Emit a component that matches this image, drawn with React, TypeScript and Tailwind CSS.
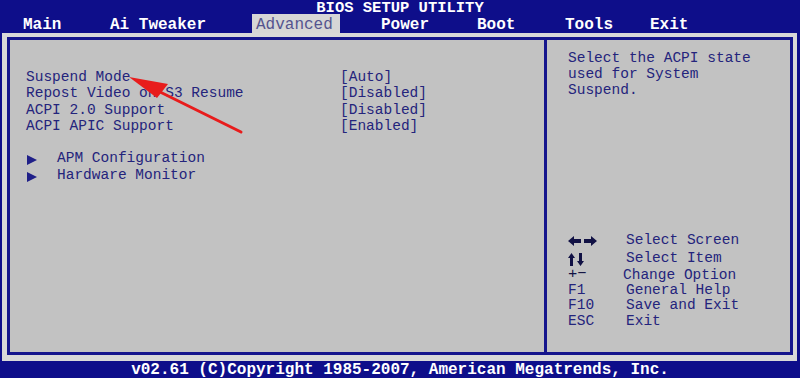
import React from "react";

const mono = { fontFamily: '"Courier New", "Liberation Mono", monospace' };

function Tri() {
  return (
    <svg width="10" height="10" viewBox="0 0 10 10" className="absolute left-[1px] top-[5px]">
      <polygon points="0,0 10,5 0,10" fill="#1f1f88" />
    </svg>
  );
}

function LR() {
  return (
    <svg width="30" height="10" viewBox="0 0 30 10">
      <polygon points="0,5 6,0 6,3 13,3 13,7 6,7 6,10" fill="#111144" />
      <polygon points="29,5 23,0 23,3 16,3 16,7 23,7 23,10" fill="#111144" />
    </svg>
  );
}

function UD() {
  return (
    <svg width="16" height="13" viewBox="0 0 16 13">
      <polygon points="3.5,0 7,5 5,5 5,13 2,13 2,5 0,5" fill="#111144" />
      <polygon points="12.5,13 16,8 14,8 14,0 11,0 11,8 9,8" fill="#111144" />
    </svg>
  );
}

export default function App() {
  const settings: [string, string][] = [
    ["Suspend Mode", "[Auto]"],
    ["Repost Video on S3 Resume", "[Disabled]"],
    ["ACPI 2.0 Support", "[Disabled]"],
    ["ACPI APIC Support", "[Enabled]"],
  ];
  return (
    <div
      className="relative w-[800px] h-[378px] bg-[#0e0e8a] flex flex-col overflow-hidden"
      style={mono}
    >
      {/* header */}
      <div className="h-[33px] flex flex-col">
        <div className="h-[14px] leading-[16px] text-center text-white font-bold text-[15.5px]">
          BIOS SETUP UTILITY
        </div>
        <div className="h-[19px] flex items-stretch text-white font-bold text-[16px] leading-[16px] pl-[23px]">
          <span className="w-[87px] pt-[3px]">Main</span>
          <span className="w-[142px] pt-[3px]">Ai Tweaker</span>
          <span className="w-[88px] bg-[#d6d6d6] text-[#54548e] font-normal pl-[4px] pt-[3px]">Advanced</span>
          <span className="w-[41px]" />
          <span className="w-[96px] pt-[3px]">Power</span>
          <span className="w-[88px] pt-[3px]">Boot</span>
          <span className="w-[85px] pt-[3px]">Tools</span>
          <span className="pt-[3px]">Exit</span>
        </div>
      </div>

      {/* body */}
      <div className="h-[329px] ml-[2px] mr-[3px] bg-[#d8d8d8] pt-[4px] pl-[5px] pr-[4px] pb-[6px] flex">
        <div className="flex-1 border-[3px] border-[#15158c] flex bg-[#c2c2c2] text-[#24247c] text-[14.5px]">
          <div className="w-[534px] pt-[29px] pl-[16px] leading-[16.3px]">
            {settings.map(([k, v]) => (
              <div key={k} className="flex h-[16.3px]">
                <span className="w-[314px]">{k}</span>
                <span>{v}</span>
              </div>
            ))}
            <div className="h-[16.3px]" />
            {["APM Configuration", "Hardware Monitor"].map((t) => (
              <div key={t} className="relative pl-[31px] h-[16.3px]">
                <Tri />
                {t}
              </div>
            ))}
          </div>
          <div className="w-[3px] bg-[#15158c]" />
          <div className="flex-1 flex flex-col pl-[21px] pt-[10px] pb-[23px] leading-[16px]">
            <div>Select the ACPI state</div>
            <div>used for System</div>
            <div>Suspend.</div>
            <div className="flex-1" />
            <div>
              <div className="flex h-[16px] items-center">
                <span className="w-[58px] flex items-center pt-[2px]"><LR /></span>
                <span>Select Screen</span>
              </div>
              <div className="flex h-[19px] items-center">
                <span className="w-[58px] flex items-center pt-[4px]"><UD /></span>
                <span>Select Item</span>
              </div>
              <div className="flex h-[15px] items-center">
                <span className="w-[55px] text-[#111144] text-[15.5px] leading-[15px]">+−</span>
                <span>Change Option</span>
              </div>
              <div className="flex h-[15px] items-center">
                <span className="w-[58px]">F1</span>
                <span>General Help</span>
              </div>
              <div className="flex h-[16px] items-center">
                <span className="w-[58px]">F10</span>
                <span>Save and Exit</span>
              </div>
              <div className="flex h-[16px] items-center">
                <span className="w-[58px]">ESC</span>
                <span>Exit</span>
              </div>
            </div>
          </div>
        </div>
      </div>

      {/* footer */}
      <div className="flex-1 text-center text-white font-bold text-[16px] leading-[16px] pt-[1px]">
        v02.61 (C)Copyright 1985-2007, American Megatrends, Inc.
      </div>

      {/* red arrow annotation */}
      <svg className="absolute left-0 top-0 pointer-events-none" width="800" height="378" viewBox="0 0 800 378">
        <line x1="241" y1="132" x2="150" y2="87" stroke="#e81c1c" strokeWidth="3" strokeLinecap="round" />
        <polygon points="129,77 168,84 157,98" fill="#e81c1c" />
      </svg>
    </div>
  );
}
